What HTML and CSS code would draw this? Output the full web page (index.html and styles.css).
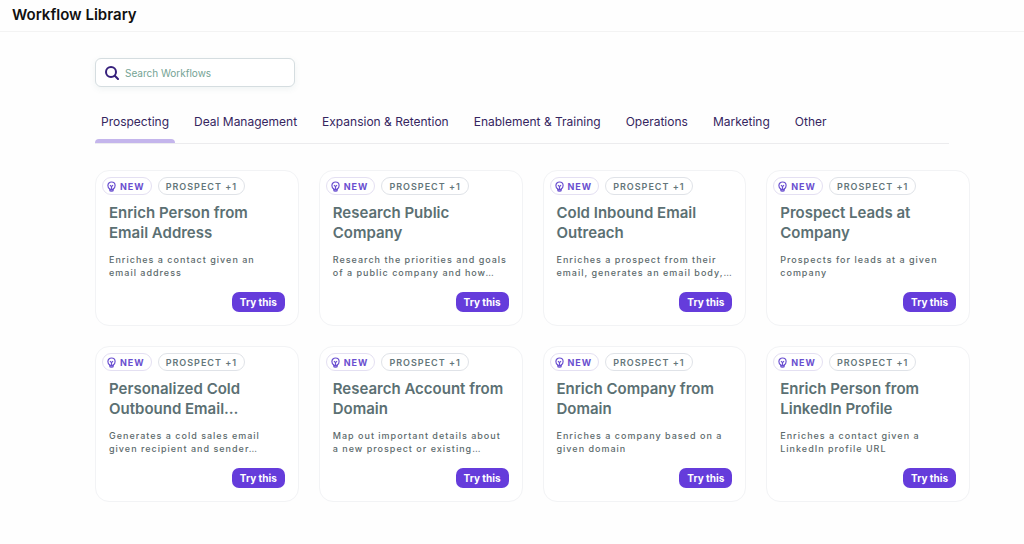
FILE: index.html
```html
<!DOCTYPE html>
<html lang="en">
  <head>
    <meta charset="UTF-8" />
    <meta name="viewport" content="width=device-width, initial-scale=1.0" />
    <title>Workflow Library</title>
    <link rel="stylesheet" href="styles.css">
  </head>

  <body>
    <svg class="sprite" aria-hidden="true">
      <symbol id="bulb" viewBox="0 0 10 12">
        <path d="M3 8.800C1.700 8 1 6.500 1 4.900C1 2.600 2.800 1 5 1s4 1.600 4 3.900c0 1.600-.7 3.100-2 3.900" />
        <path d="M3 7.600v2.200c0 .9.700 1.400 2 1.400s2-.5 2-1.400V7.600M3 9.400h4M5 9V5.400M3.300 4.500L5 6.200l1.700-1.700" />
      </symbol>
    </svg>

    <header class="topbar">
      <h1>Workflow Library</h1>
    </header>

    <main class="library">
      <label class="search">
        <svg class="search-icon" viewBox="0 0 14 14" aria-hidden="true">
          <circle cx="6" cy="6" r="5" />
          <path d="M9.800 9.800L13 13" />
        </svg>
        <input type="text" placeholder="Search Workflows" aria-label="Search Workflows" />
      </label>

      <nav class="tabs">
        <button class="tab active">Prospecting</button>
        <button class="tab">Deal Management</button>
        <button class="tab">Expansion &amp; Retention</button>
        <button class="tab">Enablement &amp; Training</button>
        <button class="tab">Operations</button>
        <button class="tab">Marketing</button>
        <button class="tab">Other</button>
      </nav>

      <section class="cards">
        <article class="card">
          <div class="tags">
            <span class="tag new"><svg><use href="#bulb" /></svg>NEW</span>
            <span class="tag">PROSPECT +1</span>
          </div>
          <h2>Enrich Person from Email Address</h2>
          <p>Enriches a contact given an <br />email address</p>
          <button class="try">Try this</button>
        </article>

        <article class="card">
          <div class="tags">
            <span class="tag new"><svg><use href="#bulb" /></svg>NEW</span>
            <span class="tag">PROSPECT +1</span>
          </div>
          <h2>Research Public Company</h2>
          <p>Research the priorities and goals of a public company and how…</p>
          <button class="try">Try this</button>
        </article>

        <article class="card">
          <div class="tags">
            <span class="tag new"><svg><use href="#bulb" /></svg>NEW</span>
            <span class="tag">PROSPECT +1</span>
          </div>
          <h2>Cold Inbound Email Outreach</h2>
          <p>Enriches a prospect from their email, generates an email body,…</p>
          <button class="try">Try this</button>
        </article>

        <article class="card">
          <div class="tags">
            <span class="tag new"><svg><use href="#bulb" /></svg>NEW</span>
            <span class="tag">PROSPECT +1</span>
          </div>
          <h2>Prospect Leads at Company</h2>
          <p>Prospects for leads at a given company</p>
          <button class="try">Try this</button>
        </article>

        <article class="card">
          <div class="tags">
            <span class="tag new"><svg><use href="#bulb" /></svg>NEW</span>
            <span class="tag">PROSPECT +1</span>
          </div>
          <h2>Personalized Cold Outbound Email…</h2>
          <p>Generates a cold sales email given recipient and sender…</p>
          <button class="try">Try this</button>
        </article>

        <article class="card">
          <div class="tags">
            <span class="tag new"><svg><use href="#bulb" /></svg>NEW</span>
            <span class="tag">PROSPECT +1</span>
          </div>
          <h2>Research Account from Domain</h2>
          <p>Map out important details about <br />a new prospect or existing…</p>
          <button class="try">Try this</button>
        </article>

        <article class="card">
          <div class="tags">
            <span class="tag new"><svg><use href="#bulb" /></svg>NEW</span>
            <span class="tag">PROSPECT +1</span>
          </div>
          <h2>Enrich Company from Domain</h2>
          <p>Enriches a company based on a given domain</p>
          <button class="try">Try this</button>
        </article>

        <article class="card">
          <div class="tags">
            <span class="tag new"><svg><use href="#bulb" /></svg>NEW</span>
            <span class="tag">PROSPECT +1</span>
          </div>
          <h2>Enrich Person from LinkedIn Profile</h2>
          <p>Enriches a contact given a LinkedIn profile URL</p>
          <button class="try">Try this</button>
        </article>
      </section>
    </main>
  </body>
</html>
```

FILE: styles.css
```css
* {
  box-sizing: border-box;
}

body {
  margin: 0;
  font-family: Inter, "Liberation Sans", sans-serif;
  background-color: #fefefe;
  color: #5b7073;
}

button,
input {
  font-family: inherit;
}

.sprite {
  display: none;
}

.topbar {
  padding: 5px 12px 6px;
  border-bottom: 1px solid #f3f3f3;
}

h1 {
  margin: 0;
  font-size: 15px;
  line-height: 20px;
  font-weight: 600;
  color: #111111;
}

.library {
  padding: 26px 54px 40px 95px;
}

.search {
  display: flex;
  align-items: center;
  gap: 6px;
  width: 200px;
  height: 29px;
  padding: 0 9px;
  border: 1px solid #d5dde0;
  border-radius: 6px;
  background-color: #ffffff;
  box-shadow: 0 2px 6px rgba(60, 110, 110, 0.08);
}

.search-icon {
  flex: none;
  width: 14px;
  height: 14px;
  fill: none;
  stroke: #36207c;
  stroke-width: 2;
  stroke-linecap: round;
}

.search input {
  width: 100%;
  padding: 0;
  border: none;
  outline: none;
  background: none;
  font-size: 10px;
  color: #36207c;
}

.search input::placeholder {
  color: #74a394;
}

/* Category tabs */
.tabs {
  display: flex;
  gap: 13px;
  margin: 21px 21px 26px 0;
  border-bottom: 1px solid #ececee;
}

.tab {
  padding: 5px 6px 8px;
  border: none;
  background: none;
  font-size: 12px;
  line-height: 18px;
  color: #35255f;
  white-space: nowrap;
  cursor: pointer;
}

.tab::after {
  content: "";
  display: block;
  height: 4px;
  margin: 8px -6px -8px;
  border-radius: 4px 4px 0 0;
}

.tab.active::after {
  background-color: #c4b5ec;
}

/* Workflow cards */
.cards {
  display: grid;
  grid-template-columns: repeat(4, 1fr);
  gap: 20px;
}

.card {
  display: flex;
  flex-direction: column;
  padding: 6px 13px 13px;
  border: 1px solid #f2f3f5;
  border-radius: 14px;
  background-color: #ffffff;
}

.tags {
  display: flex;
  gap: 6px;
  margin: 0 -7px;
}

.tag {
  display: flex;
  align-items: center;
  gap: 4px;
  height: 18px;
  padding: 0 7px;
  border: 1px solid #e0e3e8;
  border-radius: 10px;
  font-size: 9px;
  font-weight: 600;
  letter-spacing: 1px;
  color: #64767a;
  white-space: nowrap;
}

.tag.new {
  padding: 0 6px 0 4px;
  border-color: #e4e0f2;
  font-weight: 700;
  color: #6a4fd0;
}

.tag svg {
  width: 9px;
  height: 11px;
  fill: none;
  stroke: #6a4fd0;
  stroke-width: 1.3;
}

.card h2 {
  margin: 8px 0 10px;
  font-size: 15px;
  line-height: 20px;
  font-weight: 600;
}

.card p {
  margin: 0 -3px 13px 0;
  font-size: 9px;
  line-height: 13px;
  font-weight: 500;
  letter-spacing: 1px;
  color: #5c6a6c;
}

.try {
  align-self: flex-end;
  height: 20px;
  margin-top: auto;
  padding: 0 8px;
  border: none;
  border-radius: 7px;
  background-color: #653cdb;
  font-size: 10px;
  font-weight: 700;
  color: #ffffff;
  cursor: pointer;
}

.try:hover {
  background-color: #5630c4;
}
```
